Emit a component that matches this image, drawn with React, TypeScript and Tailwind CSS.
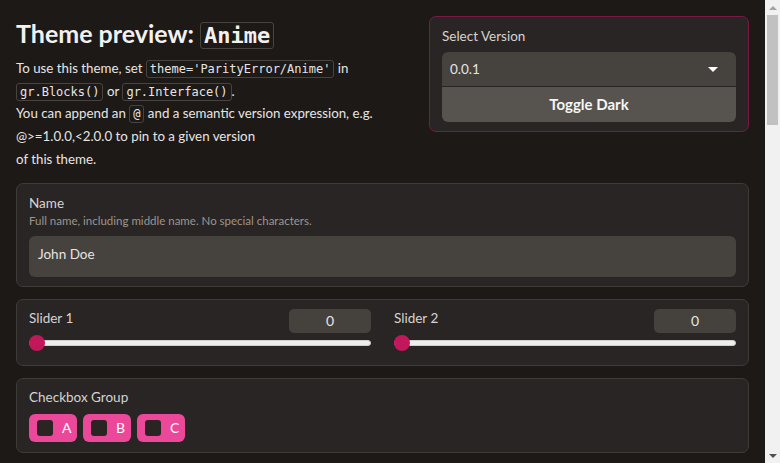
import React from "react";

const sans = { fontFamily: "Lato, 'Noto Sans', sans-serif" };

function Code({ children }: { children: React.ReactNode }) {
  return (
    <code className="font-['DejaVu_Sans_Mono',monospace] text-[12px] leading-[15px] border border-[#48433e] rounded-[3px] px-[3px] py-[1px] text-[#e7e5e4]">
      {children}
    </code>
  );
}

function Slider({ label }: { label: string }) {
  return (
    <div className="flex-1 flex flex-col">
      <div className="flex justify-between items-start">
        <span className="text-[13.5px] leading-[20px] text-[#d6d3d1] mt-[-1px]">{label}</span>
        <div className="w-[82px] h-[24px] rounded-[5px] bg-[#45423d] text-[14px] text-[#e7e5e4] flex items-center justify-center">
          0
        </div>
      </div>
      <div className="relative h-[16px] mt-[2px] flex items-center">
        <div className="w-full h-[6px] rounded-full bg-[#eeeeee] border border-[#cfcfcf]" />
        <div className="absolute left-0 w-[16px] h-[16px] rounded-full bg-[#c2185b]" />
      </div>
    </div>
  );
}

function Check({ letter }: { letter: string }) {
  return (
    <label className="flex items-center h-[28px] w-[48px] rounded-[6px] bg-[#ec4899] pl-[8px] gap-[9px]">
      <span className="w-[16px] h-[16px] rounded-[3px] bg-[#2a2523]" />
      <span className="text-[14px] text-white">{letter}</span>
    </label>
  );
}

function Scrollbar() {
  return (
    <div className="w-[15px] h-full bg-[#f1f1f1] flex flex-col items-center">
      <div className="h-[15px] w-full flex items-center justify-center">
        <span className="w-0 h-0 border-l-[4px] border-r-[4px] border-b-[4px] border-l-transparent border-r-transparent border-b-[#a3a3a3]" />
      </div>
      <div className="w-[11px] h-[110px] bg-[#c1c1c1]" />
      <div className="flex-1" />
      <div className="h-[15px] w-full flex items-center justify-center">
        <span className="w-0 h-0 border-l-[4px] border-r-[4px] border-t-[4px] border-l-transparent border-r-transparent border-t-[#505050]" />
      </div>
    </div>
  );
}

export default function App() {
  return (
    <div className="h-screen flex overflow-hidden bg-[#1c1917] text-[#e7e5e4]" style={sans}>
      <div className="flex-1 min-w-0 h-full overflow-hidden">
        <div className="p-4 flex flex-col gap-3">
          <div className="flex gap-4">
            <div className="flex-1">
              <h1 className="text-[25px] font-bold leading-[32px] mt-[1px] mb-[5px] text-[#f2f1f0]">
                Theme preview:{" "}
                <code className="font-['DejaVu_Sans_Mono',monospace] text-[22px] border border-[#48433e] rounded-[3px] px-[3px]">
                  Anime
                </code>
              </h1>
              <div className="text-[13.3px] leading-[22.7px] text-[#e7e5e4]">
                <p>
                  To use this theme, set <Code>theme='ParityError/Anime'</Code> in
                  <br />
                  <Code>gr.Blocks()</Code> or <Code>gr.Interface()</Code>.
                </p>
                <p>
                  You can append an <Code>@</Code> and a semantic version expression, e.g.
                  <br />
                  @&gt;=1.0.0,&lt;2.0.0 to pin to a given version
                  <br />
                  of this theme.
                </p>
              </div>
            </div>
            <div className="w-[320px] h-[116px] border border-[#7a1846] rounded-[7px] bg-[#292524] px-3 pt-[9px] flex flex-col">
              <span className="text-[13.5px] leading-[20px] text-[#d6d3d1] mb-[6px]">Select Version</span>
              <div className="h-[34px] rounded-t-[6px] bg-[#46433e] flex items-center justify-between px-[8px] text-[13.5px]">
                <span>0.0.1</span>
                <span className="w-0 h-0 border-l-[5px] border-r-[5px] border-t-[5px] border-l-transparent border-r-transparent border-t-white mr-[10px]" />
              </div>
              <button className="h-[35px] mt-[1px] rounded-b-[6px] bg-[#57534e] text-[15px] font-bold text-[#f5f5f4]">
                Toggle Dark
              </button>
            </div>
          </div>

          <div className="border border-[#3f3b37] rounded-[7px] bg-[#292524] px-3 pt-[9px] pb-[9px]">
            <div className="text-[13.5px] leading-[20px] text-[#d6d3d1]">Name</div>
            <div className="text-[11.5px] leading-[16px] text-[#9c958f]">Full name, including middle name. No special characters.</div>
            <div className="mt-[7px] h-[41px] rounded-[6px] bg-[#46423e] flex items-center px-[9px] text-[13.5px] pb-[4px]">
              John Doe
            </div>
          </div>

          <div className="border border-[#3f3b37] rounded-[7px] bg-[#292524] px-3 pt-[9px] pb-[14px] flex gap-[23px]">
            <Slider label="Slider 1" />
            <Slider label="Slider 2" />
          </div>

          <div className="border border-[#3f3b37] rounded-[7px] bg-[#292524] px-3 pt-[8px] pb-[10px]">
            <div className="text-[13.5px] leading-[20px] text-[#d6d3d1]">Checkbox Group</div>
            <div className="flex gap-[6px] mt-[7px]">
              <Check letter="A" />
              <Check letter="B" />
              <Check letter="C" />
            </div>
          </div>
        </div>
      </div>
      <Scrollbar />
    </div>
  );
}
